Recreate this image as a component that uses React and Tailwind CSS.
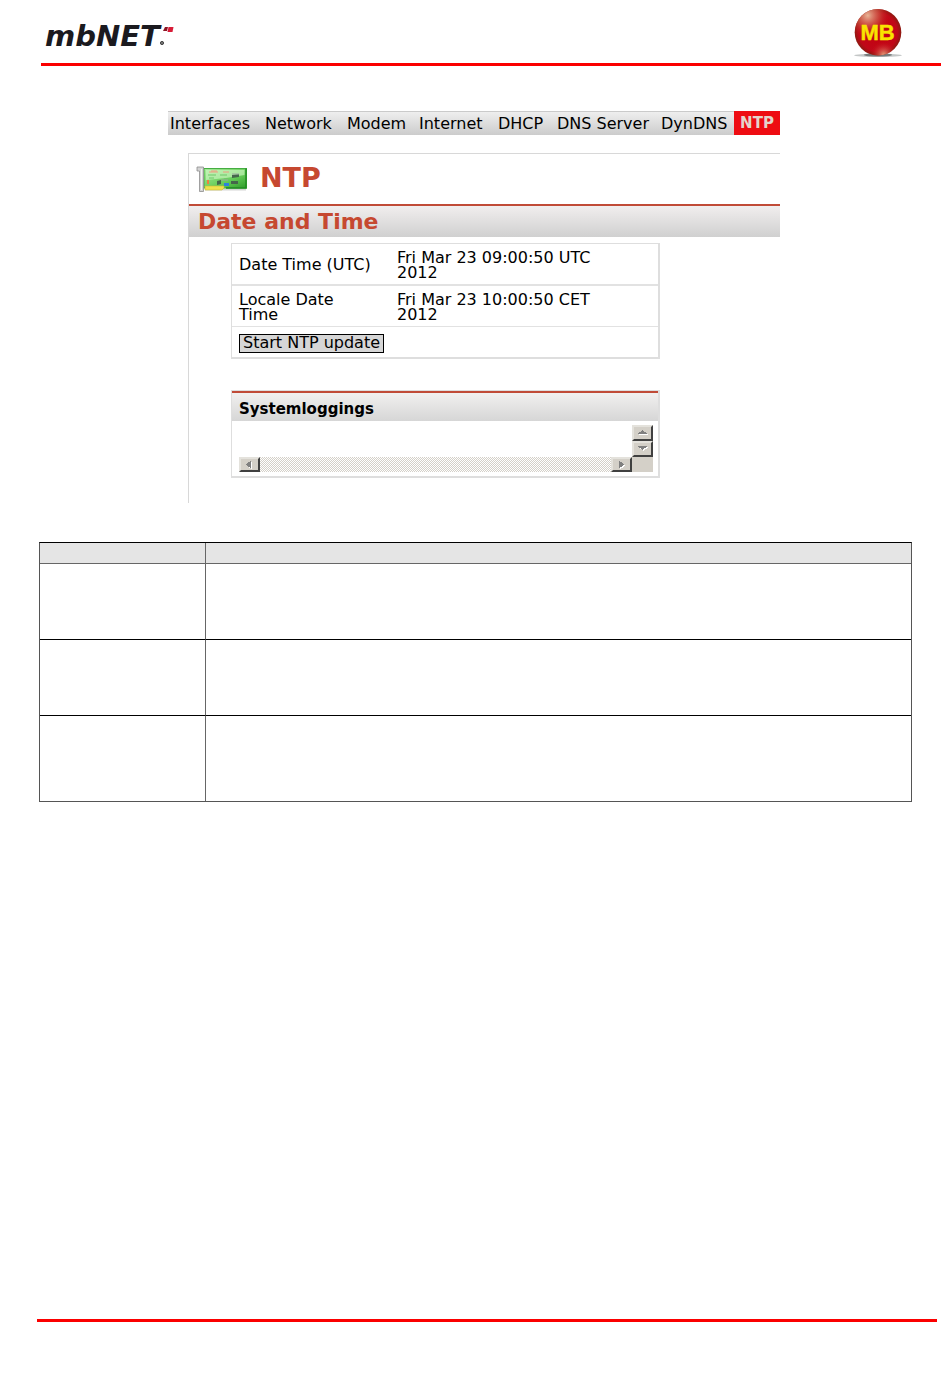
const TABS = ['Interfaces', 'Network', 'Modem', 'Internet', 'DHCP', 'DNS Server', 'DynDNS', 'NTP']

const TIMES = [
  { label: 'Date Time (UTC)', value: 'Fri Mar 23 09:00:50 UTC 2012', row: 'h-[42px]', border: 'border-b-2' },
  { label: 'Locale Date Time', value: 'Fri Mar 23 10:00:50 CET 2012', row: 'h-[41px]', border: 'border-b' },
]

const ROW_HEIGHTS = ['h-[76px]', 'h-[76px]', 'h-[85px]']

const ARROWS = {
  up: 'M5 1h1v1h1v1h2v1h1v1H1V4h1V3h2V2h1z',
  down: 'M1 1h9v1H9v1H7v1H6v1H5V4H4V3H2V2H1z',
  left: 'M6 0h1v7H6V6H4V5H3V4H2V3h1V2h1V1h2z',
  right: 'M3 0h1v1h2v1h1v1h1v1H7v1H6v1H4v1H3z',
}

function BallLogo() {
  return (
    <svg viewBox="0 0 50 50" className="h-[50px] w-[50px]" role="img" aria-label="MB">
      <defs>
        <radialGradient id="ball" cx="0.5" cy="0.5" r="0.5">
          <stop offset="0" stopColor="#c4000f" />
          <stop offset="0.82" stopColor="#c00818" />
          <stop offset="1" stopColor="#8c1a10" />
        </radialGradient>
        <radialGradient id="shine" cx="0.28" cy="0.14" r="0.5">
          <stop offset="0" stopColor="#e8b496" />
          <stop offset="0.5" stopColor="#cc5040" stopOpacity="0.75" />
          <stop offset="1" stopColor="#c4000f" stopOpacity="0" />
        </radialGradient>
        <radialGradient id="glow" cx="0.62" cy="0.98" r="0.3">
          <stop offset="0" stopColor="#e59a78" />
          <stop offset="1" stopColor="#c4000f" stopOpacity="0" />
        </radialGradient>
      </defs>
      <ellipse cx="25" cy="47.3" rx="24" ry="1.6" fill="#c4c7c7" />
      <ellipse cx="25" cy="47" rx="14" ry="1.6" fill="#777b7b" />
      <circle cx="25" cy="24.3" r="23.3" fill="url(#ball)" />
      <circle cx="25" cy="24.3" r="23.3" fill="url(#shine)" />
      <circle cx="25" cy="24.3" r="23.3" fill="url(#glow)" />
      <text x="24.5" y="31.5" textAnchor="middle" fontFamily="Liberation Sans, sans-serif" fontWeight="700" fontSize="22" fill="#f9e400" stroke="#f9e400" strokeWidth="0.4">
        MB
      </text>
    </svg>
  )
}

function CardIcon() {
  return (
    <svg viewBox="0 0 52 27" className="h-[27px] w-[52px]" aria-hidden="true">
      <defs>
        <linearGradient id="board" x1="0" y1="0" x2="1" y2="1">
          <stop offset="0" stopColor="#a8ec9c" />
          <stop offset="0.6" stopColor="#66cc58" />
          <stop offset="1" stopColor="#2e9a2a" />
        </linearGradient>
      </defs>
      <path d="M9 23.5h41" stroke="#d6d6d6" strokeWidth="2" />
      <rect x="8" y="2.5" width="42.5" height="19.5" fill="url(#board)" stroke="#46ad42" />
      <path d="M50 2.5V22H30" fill="none" stroke="#1f8a20" strokeWidth="1.4" />
      <path d="M10 4h38.5v5L30 12l-20 2z" fill="#d4f8c8" opacity="0.6" />
      <path d="M13 6h9M15 5h6M27 6h6" stroke="#ef9c80" />
      <path d="M12 9h8M24 9h7M28 13h6M13 12h5" stroke="#6cc868" />
      <path d="M36 9l7-1v3l-7 1zM21 15l4-1v4l-4 1zM35 15h7v3h-7z" fill="#45664b" />
      <path d="M25 14h7M36 8h7" stroke="#9aa89c" />
      <path d="M11 14h2v4h-2z" fill="#f08040" />
      <path d="M28 17h5v3h-5z" fill="#2e7fe0" />
      <path d="M9 20h19v2l-2 2H9z" fill="#efe24d" stroke="#c8b83a" strokeWidth="0.6" />
      <path d="M1 1h6.5v24.5h-4V5H1z" fill="#d4d4d4" stroke="#8d8d8d" strokeWidth="0.8" />
      <path d="M5.5 3v21" stroke="#f2f2f2" />
    </svg>
  )
}

function ScrollButton({ direction, className = '' }) {
  return (
    <button
      aria-label={`Scroll ${direction}`}
      className={`flex items-center justify-center border-2 border-t-[#e4e2dc] border-l-[#e4e2dc] border-r-[#404040] border-b-[#404040] bg-[#d4d0c8] ${className}`}
    >
      <svg viewBox="0 0 12 8" className="h-2 w-3" shapeRendering="crispEdges">
        <path d={ARROWS[direction]} fill="#fff" transform="translate(1 1)" />
        <path d={ARROWS[direction]} fill="#808080" />
      </svg>
    </button>
  )
}

function LogBox() {
  return (
    <div className="grid grid-cols-[1fr_21px] grid-rows-[32px_15px]">
      <textarea readOnly aria-labelledby="log-title" className="h-full w-full resize-none overflow-hidden bg-white outline-none" />
      <div className="grid grid-rows-2">
        <ScrollButton direction="up" />
        <ScrollButton direction="down" />
      </div>
      <div className="flex justify-between bg-[conic-gradient(#d4d0c8_25%,#fff_0_50%,#d4d0c8_0_75%,#fff_0)] bg-[length:2px_2px]">
        <ScrollButton direction="left" className="w-[21px]" />
        <ScrollButton direction="right" className="w-[21px]" />
      </div>
      <div className="bg-[#d4d0c8]" />
    </div>
  )
}

function NtpPanel() {
  return (
    <main className="border-t border-l border-[#d8d8d8] pb-[25px]">
      <div className="flex h-[50px] items-center gap-3 pl-[7px]">
        <CardIcon />
        <h1 className="pb-1 text-[27px] leading-none font-bold text-[#c64830]">NTP</h1>
      </div>
      <h2 className="flex h-[33px] items-center border-t-2 border-[#c04b37] bg-linear-to-b from-[#f1eeee] to-[#d0d0d0] pl-[9px] text-[22px] leading-none font-bold text-[#c64830]">
        Date and Time
      </h2>

      <div className="mt-[6px] mr-[120px] ml-[42px]">
        <table className="w-full table-fixed border-separate border-spacing-0 border border-r-2 border-b-2 border-[#dedede] text-[16px] leading-[15px]">
          <tbody>
            {TIMES.map((time) => (
              <tr key={time.label} className={time.row}>
                <th className={`w-[158px] border-[#e2e2e2] pt-px pr-4 pl-[7px] text-left font-normal ${time.border}`}>
                  {time.label}
                </th>
                <td className={`border-[#e2e2e2] pt-px pr-10 pl-[7px] ${time.border}`}>{time.value}</td>
              </tr>
            ))}
            <tr className="h-[30px]">
              <td colSpan={2} className="pt-[2px] pl-[7px]">
                <button className="flex h-[19px] w-[145px] items-center justify-center border border-black bg-[#d6d6d6] text-[16px] leading-none whitespace-nowrap">
                  Start NTP update
                </button>
              </td>
            </tr>
          </tbody>
        </table>

        <section className="mt-[31px] border border-r-2 border-b-2 border-[#dedede]">
          <h3
            id="log-title"
            className="flex h-[30px] items-center border-t-2 border-[#c04b37] bg-linear-to-b from-[#f1f0ef] to-[#d6d6d6] pt-1 pl-[7px] text-[15px] leading-none font-bold"
          >
            Systemloggings
          </h3>
          <div className="pt-1 pr-[5px] pb-1 pl-[7px]">
            <LogBox />
          </div>
        </section>
      </div>
    </main>
  )
}

function DescriptionTable() {
  return (
    <table className="w-full table-fixed border-separate border-spacing-0 border border-t-black border-r-[#555] border-b-[#555] border-l-[#555]">
      <thead>
        <tr className="h-[21px] bg-[#e5e5e5]">
          <th className="w-[166px] border-r border-b border-[#666]" />
          <th className="border-b border-[#666]" />
        </tr>
      </thead>
      <tbody>
        {ROW_HEIGHTS.map((height, i) => (
          <tr key={i} className={height}>
            <td className={`border-r border-r-[#666] ${i < 2 ? 'border-b border-b-black' : ''}`} />
            <td className={i < 2 ? 'border-b border-b-black' : ''} />
          </tr>
        ))}
      </tbody>
    </table>
  )
}

export default function App() {
  return (
    <div className="flex min-h-screen flex-col bg-white font-['DejaVu_Sans',sans-serif] text-black">
      <header className="mr-[9px] ml-[41px] flex h-[66px] items-start justify-between border-b-[3px] border-[#fb0000] pt-2 pr-[38px] pl-1">
        <div className="flex pt-[14px]">
          <span className="text-[29px] leading-7 font-bold text-[#1b1a1f] italic">mbNET</span>
          <svg viewBox="0 0 16 24" className="h-6 w-4" aria-hidden="true">
            <path d="M5 5h3l-1 4H3z" fill="#8c1424" />
            <path d="M8.5 5h5l-1 5h-5z" fill="#d81c38" />
            <circle cx="2" cy="21" r="1.6" fill="#777" stroke="#444" />
          </svg>
        </div>
        <BallLogo />
      </header>

      <div className="mt-[45px] max-w-[780px] pl-[168px]">
        <nav className="grid h-6 grid-cols-[95fr_82fr_72fr_79fr_59fr_104fr_75fr_46fr] border-t border-[#cacaca] bg-linear-to-b from-[#eeeeee] to-[#cccccc] text-[16px] leading-none">
          {TABS.map((tab) => (
            <a
              key={tab}
              href={`#${tab}`}
              className={`flex items-center whitespace-nowrap ${
                tab === 'NTP' ? '-mt-px justify-center bg-[#ee0c12] text-[15px] font-bold text-[#e4d4cc]' : 'pl-[2px]'
              }`}
            >
              {tab}
            </a>
          ))}
        </nav>
        <div className="mt-[18px] ml-5">
          <NtpPanel />
        </div>
      </div>

      <div className="mt-[39px] mr-[38px] ml-[39px]">
        <DescriptionTable />
      </div>

      <footer className="mt-auto mr-[13px] mb-14 ml-[37px] border-t-[3px] border-[#fb0000]" />
    </div>
  )
}
